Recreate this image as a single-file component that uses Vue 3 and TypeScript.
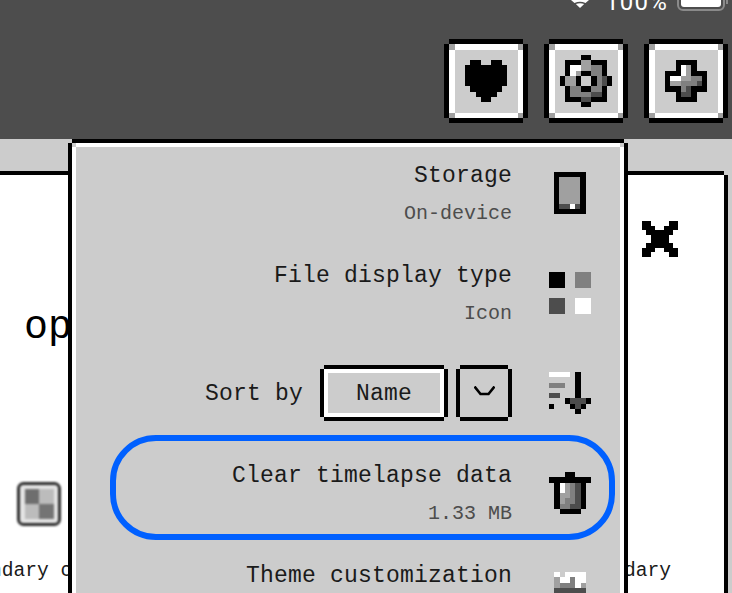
<template>
  <div class="screen">
    <header class="topbar">
      <div class="status">
        <svg class="wifi" width="18" height="8" viewBox="0 0 18 8">
          <path d="M0 0 L3.5 3 Q9 0.6 14.5 3 L18 0 Z" fill="#fff" />
          <path d="M4.8 4 Q9 2.4 13.2 4 L9 8 Z" fill="#fff" />
        </svg>
        <span class="percent">100%</span>
        <div class="battery"><div class="battery-fill"></div></div>
      </div>
      <div class="actions">
        <PixelIcon v-for="(grid, i) in actionButtons" :key="i" :grid="grid" />
      </div>
    </header>

    <section class="card">
      <div class="card-close">
        <svg width="36" height="36" viewBox="0 0 36 36" shape-rendering="crispEdges">
          <path d="M0 0H9V5H13V9H22V5H27V0H36V9H31V14H27V22H31V27H36V36H27V31H22V27H13V31H9V36H0V27H4V22H9V14H4V9H0Z" fill="#000" />
        </svg>
      </div>
      <div class="card-title">op</div>
      <div class="card-swatch">
        <svg class="swatch" width="44" height="44" viewBox="0 0 44 44">
          <rect x="1.5" y="1.5" width="41" height="41" rx="5" fill="#e4e4e4" stroke="#2e2e2e" stroke-width="3" />
          <rect x="8" y="7" width="14" height="15" fill="#6e6e6e" />
          <rect x="22" y="7" width="15" height="15" fill="#bcbcbc" />
          <rect x="8" y="22" width="14" height="15" fill="#bcbcbc" />
          <rect x="22" y="22" width="15" height="15" fill="#747474" />
        </svg>
      </div>
      <div class="card-labels">
        <span>Secondary color</span>
        <span>Secondary</span>
      </div>
    </section>

    <aside class="menu">
      <span class="menu-corner tl"></span>
      <span class="menu-corner tr"></span>
      <div class="ring"></div>
      <div v-for="item in menuItems" :key="item.title" class="menu-row">
        <div v-if="item.sort" class="sort">
          <span class="menu-title">{{ item.title }}</span>
          <div class="select select-name">Name</div>
          <div class="select select-arrow">
            <svg width="21" height="11" viewBox="0 0 21 11">
              <path d="M0.5 0.5 L6.5 8 H14.5 L20.5 0.5" fill="none" stroke="#000" stroke-width="2.6" />
            </svg>
          </div>
        </div>
        <div v-else class="menu-text">
          <span class="menu-title">{{ item.title }}</span>
          <span class="menu-sub">{{ item.sub }}</span>
        </div>
        <div class="menu-icon">
          <PixelIcon :grid="item.icon" />
        </div>
      </div>
    </aside>
  </div>
</template>

<script setup lang="ts">
import { h } from 'vue'
import type { FunctionalComponent } from 'vue'

const colors: Record<string, string> = {
  K: '#000000',
  D: '#4d4d4d',
  M: '#808080',
  G: '#a0a0a0',
  L: '#cccccc',
  W: '#ffffff'
}

// one character per pixel, '.' is transparent
const PixelIcon: FunctionalComponent<{ grid: string[]; unit?: number }> = ({ grid, unit = 5.25 }) => {
  const rects = grid.flatMap((row, y) =>
    [...row].flatMap((c, x) =>
      colors[c] ? [h('rect', { x, y, width: 1, height: 1, fill: colors[c] })] : []
    )
  )
  return h(
    'svg',
    {
      width: grid[0].length * unit,
      height: grid.length * unit,
      viewBox: `0 0 ${grid[0].length} ${grid.length}`,
      'shape-rendering': 'crispEdges',
      style: 'display:block'
    },
    rects
  )
}

// the 16x16 button frame with an 8 or 10 cell glyph in the middle
const framed = (glyph: string[]): string[] => {
  const rows = [
    '.KKKKKKKKKKKKKK.',
    'KGWWWWWWWWWWWWGK',
    ...Array(12).fill('KWLLLLLLLLLLLLWK'),
    'KGWWWWWWWWWWWWGK',
    '.KKKKKKKKKKKKKK.'
  ] as string[]
  const offset = (16 - glyph.length) / 2
  glyph.forEach((line, i) => {
    const row = rows[i + offset]
    rows[i + offset] = row.slice(0, offset) + [...line].map((c, j) => (c === '.' ? row[offset + j] : c)).join('') + row.slice(offset + line.length)
  })
  return rows
}

const actionButtons = [
  framed([
    '.KK..KK.',
    'KKKKKKKK',
    'KKKKKKKK',
    'KKKKKKKK',
    'KKKKKKKK',
    '.KKKKKK.',
    '..KKKK..',
    '...KK...'
  ]),
  framed([
    '....KK....',
    '.KKKGGKKK.',
    '.KWWGGMMK.',
    '.KWGKKMMK.',
    'KGGKLLKMDK',
    'KGGKLLKMDK',
    '.KMMKKMMK.',
    '.KMMMMDDK.',
    '.KKKDDKKK.',
    '....KK....'
  ]),
  framed([
    '..KKKK..',
    '..KWGK..',
    'KKKWGKKK',
    'KWWGGMMK',
    'KGGMMMDK',
    'KKKMDKKK',
    '..KDDK..',
    '..KKKK..'
  ])
]

const menuItems = [
  {
    title: 'Storage',
    sub: 'On-device',
    icon: ['KKKKKK', 'KGGGGK', 'KGGGGK', 'KGGGGK', 'KGGGGK', 'KGGGGK', 'KDDWDK', 'KKKKKK']
  },
  {
    title: 'File display type',
    sub: 'Icon',
    icon: ['KKK..MMM', 'KKK..MMM', 'KKK..MMM', '........', '........', 'DDD..WWW', 'DDD..WWW', 'DDD..WWW']
  },
  {
    title: 'Sort by',
    sort: true,
    icon: ['WWWW.K..', '.....K..', 'MMM..K..', '.....K..', 'DD...K..', '...KDDDK', 'K...KDK.', '.....K..']
  },
  {
    title: 'Clear timelapse data',
    sub: '1.33 MB',
    icon: ['...KK...', 'KKKKKKKK', '.KWGMDK.', '.KWGMDK.', '.KGGMDK.', '.KGMMDK.', '.KMMDDK.', '..KKKK..']
  },
  {
    title: 'Theme customization',
    sub: 'Default',
    icon: ['.W.WWWW.', '.GWWMWW.', '.GMMMWG.', '.DDDDDD.', '.DDDDDD.', '.DDDDDD.', '.DDDDDD.', '.DDDDDD.']
  }
]
</script>

<style scoped>
.screen {
  position: relative;
  width: 732px;
  height: 593px;
  overflow: hidden;
  background: #cccccc;
  font-family: 'Liberation Mono', 'DejaVu Sans Mono', monospace;
  color: #000;
}

.topbar {
  height: 139px;
  background: #4d4d4d;
}

.status {
  display: flex;
  align-items: flex-end;
  justify-content: flex-end;
  height: 11px;
  padding-right: 7px;
  overflow: hidden;
}

.wifi {
  display: block;
  margin-bottom: 3px;
  margin-right: 16px;
}

.percent {
  margin-right: 9px;
  margin-bottom: -3px;
  font-family: Roboto, 'Liberation Sans', sans-serif;
  font-size: 24px;
  line-height: 1;
  letter-spacing: 1.2px;
  color: #fff;
}

.battery {
  position: relative;
  box-sizing: border-box;
  width: 48px;
  height: 30px;
  padding: 2px;
  border: 2px solid #8a8a8a;
  border-radius: 6px;
}

.battery::after {
  content: '';
  position: absolute;
  right: -5px;
  bottom: 5px;
  width: 2px;
  height: 8px;
  background: #8a8a8a;
}

.battery-fill {
  height: 100%;
  background: #fff;
  border-radius: 3px;
}

.actions {
  display: flex;
  justify-content: flex-end;
  gap: 16px;
  margin-top: 28px;
  padding-right: 4px;
}

.card {
  width: 724px;
  height: 420px;
  margin-top: 36px;
  background: #fff;
  box-shadow: 0 -4px 0 #000, 4px 0 0 #000;
}

.card-close {
  display: flex;
  justify-content: flex-end;
  padding: 46px 46px 0 0;
}

.card-close svg {
  display: block;
}

.card-title {
  margin-top: 46px;
  padding-left: 24px;
  font-size: 40px;
  line-height: 50px;
}

.card-swatch {
  margin-top: 129px;
  padding-left: 17px;
}

.swatch {
  display: block;
  filter: blur(0.8px);
}

.card-labels {
  display: flex;
  justify-content: space-between;
  margin: 31px 53px 0 -57px;
  font-size: 19.6px;
  line-height: 28px;
  white-space: nowrap;
  color: #1a1a1a;
}

.menu {
  position: absolute;
  left: 72px;
  top: 143px;
  box-sizing: border-box;
  display: flex;
  flex-direction: column;
  gap: 8px;
  width: 552px;
  height: 600px;
  padding-right: 29px;
  background: #cccccc;
  border: 4px solid #fff;
  box-shadow: 0 -4px 0 #000, -4px 0 0 #000, 4px 0 0 #000;
}

.menu-corner {
  position: absolute;
  top: -4px;
  width: 4px;
  height: 4px;
  background: #cccccc;
}

.menu-corner.tl {
  left: -4px;
}

.menu-corner.tr {
  right: -4px;
}

.ring {
  position: absolute;
  left: 34px;
  top: 288px;
  box-sizing: border-box;
  width: 505px;
  height: 105px;
  border: 6px solid #0060ff;
  border-radius: 46px;
}

.menu-row {
  display: flex;
  flex: none;
  align-items: center;
  justify-content: flex-end;
  gap: 37px;
  height: 92px;
}

.menu-icon {
  display: flex;
  justify-content: center;
  width: 42px;
}

.menu-text {
  display: flex;
  flex-direction: column;
  align-items: flex-end;
  padding-top: 4px;
}

.menu-title {
  font-size: 23px;
  line-height: 38px;
  letter-spacing: 0.2px;
  white-space: pre;
  color: #1a1a1a;
}

.menu-sub {
  font-size: 20px;
  line-height: 38px;
  color: #4d4d4d;
}

.sort {
  display: flex;
  align-items: center;
}

.sort .menu-title {
  padding-top: 2px;
}

.select {
  box-sizing: border-box;
  display: flex;
  align-items: center;
  justify-content: center;
  height: 48px;
  background: #cccccc;
  box-shadow: 0 -4px 0 #000, 0 4px 0 #000, -4px 0 0 #000, 4px 0 0 #000, inset 0 0 0 4px #fff;
  font-size: 23px;
  letter-spacing: 0.2px;
  color: #1a1a1a;
}

.select-name {
  width: 120px;
  margin-left: 21px;
  padding-top: 2px;
}

.select-arrow {
  width: 48px;
  margin-left: 16px;
  margin-right: 4px;
  padding-bottom: 4px;
  box-shadow: 0 -4px 0 #000, 0 4px 0 #000, -4px 0 0 #000, 4px 0 0 #000;
}

.select-arrow svg {
  display: block;
}
</style>
